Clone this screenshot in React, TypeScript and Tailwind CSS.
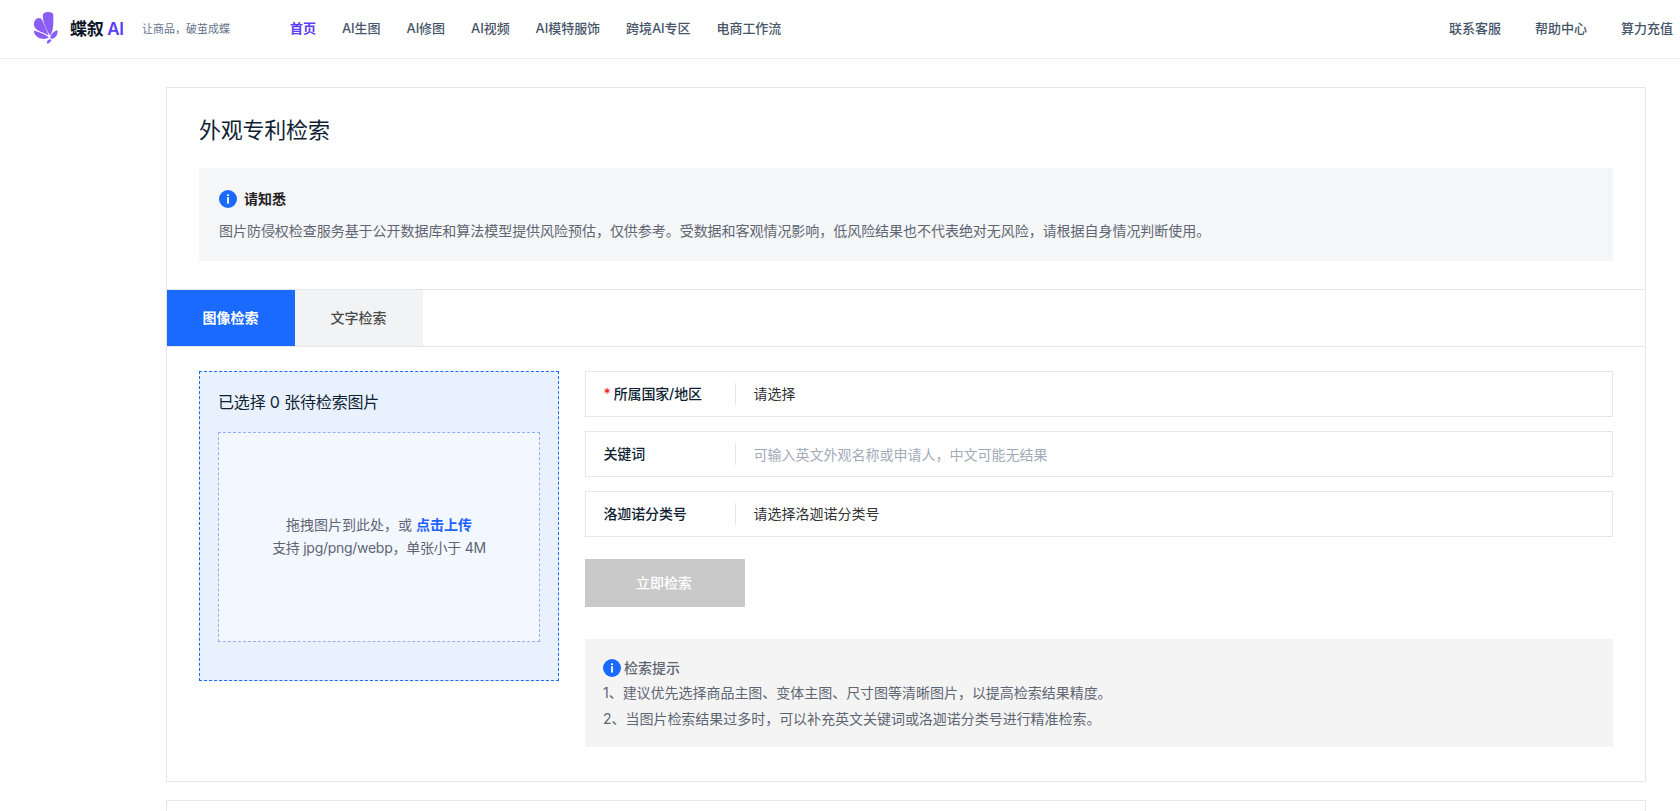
import React, { useState } from 'react'

const NAV_ITEMS = [
	'首页',
	'AI生图',
	'AI修图',
	'AI视频',
	'AI模特服饰',
	'跨境AI专区',
	'电商工作流',
]

const HEADER_LINKS = ['联系客服', '帮助中心', '算力充值']

const TABS = ['图像检索', '文字检索']

function Logo() {
	return (
		<svg className="h-[34px] w-[26px]" viewBox="0 0 26 34" fill="#8b5cf6">
			<path d="M9.800 3.500C9.800 1 12.500 0 15 0c3.500 0 5 .8 5.300 3v8c0 5-1.100 9.200-3.100 12.600C13.500 18 9.800 11 9.800 3.500z" />
			<path d="M1 13.500C.5 9.500 3 6 5.800 6c1.700 0 2.900.8 3.600 2.500L15.800 23.500C11.500 20.500 2.500 19.500 1 13.500z" />
			<path d="M.8 18.500c4 1.500 10.200 2.700 15.200 7.100-2.200 1.200-5 1.600-8 1C4 25.700.8 22.200.8 18.500z" />
			<path d="M23.400 18.600c.8-.2 1.400.2 1.300 1-.3 3.600-1.900 5.800-4.500 7-1.200.4-2.600.2-2.800-.6-.4-3 3.200-6.400 6-7.400z" />
			<path d="M14 29.700c.6-1.700 2-2.700 3.600-2.300 1 .2 1 .8.6 1.400-.8 1.400-2.200 2.500-3.200 2.700-1 .2-1.400-.8-1-1.800z" />
		</svg>
	)
}

function InfoIcon() {
	return (
		<svg className="size-[18px] shrink-0" viewBox="0 0 18 18">
			<circle cx="9" cy="9" r="9" fill="#1a6aff" />
			<rect x="8" y="4.200" width="2" height="1.800" rx=".5" fill="#fff" />
			<rect x="8.100" y="7.100" width="1.800" height="6.500" fill="#fff" />
		</svg>
	)
}

function Header() {
	return (
		<header className="flex h-[59px] items-center border-b border-[#e2eefa] bg-white pr-[7px] pl-[33px] text-[13px] whitespace-nowrap">
			<Logo />
			<div className="ml-[11px] w-[54px] text-[17px] leading-6 font-semibold tracking-[-0.02em] text-[#0f172a]">
				蝶叙 <span className="text-[#5b3df5]">AI</span>
			</div>
			<p className="ml-[18px] pt-px text-[11px] text-[#64748b]">
				让商品，破茧成蝶
			</p>
			<nav className="ml-[60px] flex gap-[26px] pb-0.5 tracking-[-0.004em]">
				{NAV_ITEMS.map((item, index) => (
					<a
						key={item}
						href="#"
						className={
							index === 0
								? 'font-semibold text-[#5b3df5]'
								: 'font-medium text-[#475569]'
						}
					>
						{item}
					</a>
				))}
			</nav>
			<div className="ml-auto flex gap-[34px] pb-0.5 font-medium text-[#475569]">
				{HEADER_LINKS.map((item) => (
					<a key={item} href="#">
						{item}
					</a>
				))}
			</div>
		</header>
	)
}

interface FieldRowProps {
	label: string
	required?: boolean
	children: React.ReactNode
}

function FieldRow({ label, required, children }: FieldRowProps) {
	return (
		<div className="flex h-[46px] items-center border border-[#e5e6eb] bg-white">
			<div className="flex h-[22px] w-[150px] items-center border-r border-[#e5e6eb] pl-[17.5px] font-medium tracking-[-0.01em] text-[#0f1f33]">
				{required && <span className="mr-[3px] text-[#f5222d]">*</span>}
				{label}
			</div>
			<div className="flex-1 px-[17.5px] text-[#333]">{children}</div>
		</div>
	)
}

function UploadPanel() {
	return (
		<section className="h-[310px] w-[360px] shrink-0 border border-dashed border-[#1a6aff] bg-[#e9f1ff] px-[18px] pt-[18px]">
			<h2 className="text-base leading-6 tracking-[-0.01em] text-[#0f1f33]">
				已选择 0 张待检索图片
			</h2>
			<div className="mt-[18px] flex h-[210px] flex-col items-center justify-center border border-dashed border-[#94aef8] bg-[#f3f7ff] pb-0.5 leading-[23px] text-[#5f6673]">
				<p>
					拖拽图片到此处，或{' '}
					<span className="font-semibold text-[#1f62ff]">点击上传</span>
				</p>
				<p className="tracking-[-0.02em]">支持 jpg/png/webp，单张小于 4M</p>
			</div>
		</section>
	)
}

function SearchForm() {
	const [keyword, setKeyword] = useState('')

	return (
		<div className="min-w-0 flex-1">
			<div className="flex flex-col gap-3.5">
				<FieldRow label="所属国家/地区" required>
					请选择
				</FieldRow>
				<FieldRow label="关键词">
					<input
						className="block w-full pt-0.5 outline-none placeholder:text-[#a3aab8]"
						placeholder="可输入英文外观名称或申请人，中文可能无结果"
						value={keyword}
						onChange={(e) => setKeyword(e.target.value)}
					/>
				</FieldRow>
				<FieldRow label="洛迦诺分类号">请选择洛迦诺分类号</FieldRow>
			</div>
			<button
				disabled
				className="mt-[22px] block h-12 w-40 bg-[#c9c9c9] pr-2 pl-1.5 font-medium text-white"
			>
				立即检索
			</button>
			<div className="mt-8 h-[108px] bg-[#f4f4f4] px-[18px] pt-[17px] leading-[26px] tracking-[-0.03px] text-[#5f6673]">
				<div className="flex h-6 items-center gap-[3px] font-medium">
					<InfoIcon />
					检索提示
				</div>
				<p>1、建议优先选择商品主图、变体主图、尺寸图等清晰图片，以提高检索结果精度。</p>
				<p>2、当图片检索结果过多时，可以补充英文关键词或洛迦诺分类号进行精准检索。</p>
			</div>
		</div>
	)
}

export default function App() {
	const [activeTab, setActiveTab] = useState(TABS[0])

	return (
		<div className="h-[811px] overflow-hidden bg-[#fefefe] font-['Inter','Noto_Sans_CJK_SC',sans-serif] text-sm">
			<Header />
			<main className="mt-7 mr-[34px] ml-[166px]">
				<div className="h-[695px] border border-[#e5e6eb] bg-white">
					<div className="px-8 pt-[26px]">
						<h1 className="text-[22px] leading-8 tracking-[-0.01em] text-[#0f1f33]">
							外观专利检索
						</h1>
						<div className="mt-[22px] h-[93px] bg-[#f5f6f8] px-5 pt-[21px]">
							<div className="flex items-center gap-[7px] font-semibold text-[#222]">
								<InfoIcon />
								请知悉
							</div>
							<p className="mt-[9px] leading-[26px] tracking-[-0.04px] text-[#5f6673]">
								图片防侵权检查服务基于公开数据库和算法模型提供风险预估，仅供参考。受数据和客观情况影响，低风险结果也不代表绝对无风险，请根据自身情况判断使用。
							</p>
						</div>
					</div>
					<div className="mt-7 flex h-[58px] border-y border-[#e5e6eb]">
						{TABS.map((tab) => (
							<button
								key={tab}
								onClick={() => setActiveTab(tab)}
								className={
									tab === activeTab
										? 'w-32 bg-[#1a6aff] pr-px font-semibold text-white'
										: 'w-32 bg-[#f2f3f5] pr-px font-medium text-[#4a4a4a]'
								}
							>
								{tab}
							</button>
						))}
					</div>
					<div className="flex gap-[26px] px-8 pt-6">
						<UploadPanel />
						<SearchForm />
					</div>
				</div>
				<div className="mt-[18px] h-40 border border-[#e5e6eb] bg-white" />
			</main>
		</div>
	)
}
